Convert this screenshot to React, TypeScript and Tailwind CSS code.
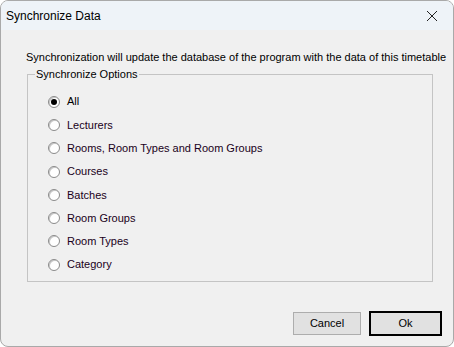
import React, { useState } from 'react';

const options = [
  'All',
  'Lecturers',
  'Rooms, Room Types and Room Groups',
  'Courses',
  'Batches',
  'Room Groups',
  'Room Types',
  'Category',
];

function Radio({ checked }: { checked: boolean }) {
  return (
    <span className="w-[12px] h-[12px] rounded-full border border-[#8a8a8a] bg-white flex items-center justify-center shrink-0 shadow-[inset_1px_1px_0_#c8c8c8]">
      {checked && <span className="w-[6px] h-[6px] rounded-full bg-black" />}
    </span>
  );
}

export default function App() {
  const [selected, setSelected] = useState(0);

  return (
    <div
      className="w-[454px] h-[347px] bg-[#f0f0f0] rounded-[8px] border border-[#a9a9a9] overflow-hidden flex flex-col text-black"
      style={{ fontFamily: '"Liberation Sans", Arial, sans-serif' }}
    >
      {/* title bar */}
      <div className="h-[29px] bg-[#eef3f8] flex items-center justify-between pl-[5px] pr-[10px] shrink-0">
        <span className="text-[12px] text-black">Synchronize Data</span>
        <svg width="12" height="12" viewBox="0 0 12 12" className="mr-[5px]">
          <path d="M1 1L11 11M11 1L1 11" stroke="#222" strokeWidth="1" />
        </svg>
      </div>

      <div className="flex-1 flex flex-col pl-[25px] pr-[20px] pt-[21px]">
        <p className="text-[11px] leading-[13px] text-black whitespace-nowrap">
          Synchronization will update the database of the program with the data of this timetable
        </p>

        <fieldset className="mt-[4px] ml-[1px] h-[214px] border border-[#c4c4c4] p-0">
          <legend className="text-[11px] leading-[13px] px-[1px] ml-[7px]">Synchronize Options</legend>
          <div className="flex flex-col pl-[20px] pt-[9px]">
            {options.map((opt, i) => (
              <label
                key={opt}
                className="h-[23.3px] flex items-center gap-[7px] text-[11px] cursor-default"
                onClick={() => setSelected(i)}
              >
                <Radio checked={selected === i} />
                <span className={i === 0 ? '' : 'text-[#1a0020]'}>{opt}</span>
              </label>
            ))}
          </div>
        </fieldset>

        <div className="flex justify-end gap-[8px] mt-[30px] mr-[-9px]">
          <button className="w-[68px] h-[23px] text-[11px] bg-[#e1e1e1] border border-[#adadad]">
            Cancel
          </button>
          <button className="w-[73px] h-[25px] text-[11px] bg-[#e1e1e1] border-2 border-black -mt-[1px]">
            Ok
          </button>
        </div>
      </div>
    </div>
  );
}
